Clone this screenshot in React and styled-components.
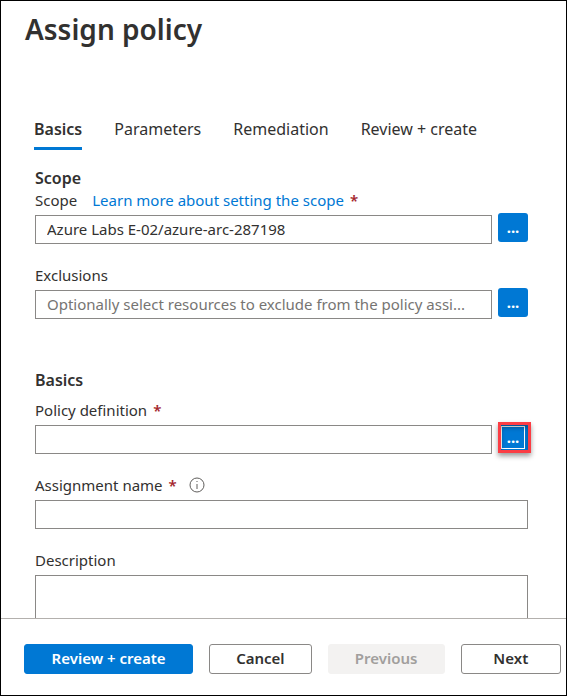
import React, { useState } from "react";
import styled, { createGlobalStyle, css } from "styled-components";

const GlobalStyle = createGlobalStyle`
  *, *::before, *::after { box-sizing: border-box; }
  body { margin: 0; background: #fff; }
  body, button, input, textarea {
    font-family: "Segoe UI", "Noto Sans", "Open Sans", sans-serif;
    font-size: 15px;
    line-height: 22px;
    color: #323130;
  }
`;

const Page = styled.div`
  display: flex;
  flex-direction: column;
  height: 100vh;
  border: 1px solid #000;
  background: #fff;
`;

const Content = styled.main`
  flex: 1;
  min-height: 0;
  overflow: hidden;
  padding: 8px 38px 0 24px;
`;

const Title = styled.h1`
  margin: 0;
  font-size: 28px;
  line-height: 40px;
  font-weight: 600;
`;

const TabList = styled.div`
  display: flex;
  gap: 32px;
  margin: 68px 0 17px 9px;
`;

const Tab = styled.button`
  padding: 0 0 6px;
  border: 0;
  border-bottom: 3px solid ${(p) => (p.$active ? "#0078d4" : "transparent")};
  background: none;
  font-size: 16px;
  line-height: 24px;
  font-weight: ${(p) => (p.$active ? 600 : 400)};
  white-space: nowrap;
  cursor: pointer;
`;

const Form = styled.form`
  display: flex;
  flex-direction: column;
  gap: 50px;
  margin-left: 10px;
`;

const Section = styled.section`
  display: flex;
  flex-direction: column;
`;

const SectionTitle = styled.h2`
  margin: 0 0 ${(p) => (p.$spaced ? 8 : 0)}px;
  font-size: 16px;
  line-height: 22px;
  font-weight: 600;
`;

const Fields = styled.div`
  display: flex;
  flex-direction: column;
  gap: 20px;
`;

const Field = styled.div`
  display: flex;
  flex-direction: column;
  gap: 4px;
`;

const LabelRow = styled.div`
  display: flex;
  align-items: center;
  height: 22px;
  white-space: nowrap;
`;

const HelpLink = styled.a`
  margin-left: 15px;
  color: #0078d4;
  text-decoration: none;
`;

const Required = styled.span`
  margin-left: 6px;
  color: #a4262c;
  font-weight: 600;
`;

const InfoIcon = styled.svg`
  width: 16px;
  height: 16px;
  margin-left: 12px;
`;

const ControlRow = styled.div`
  display: flex;
  gap: 6px;
`;

const controlStyle = css`
  display: block;
  width: 100%;
  min-width: 0;
  border: 1px solid #8a8886;
  border-radius: 0;
  background: #fff;
  padding: 0 11px 2px;
`;

const TextInput = styled.input`
  ${controlStyle}
  flex: 1;
  min-height: 29px;
  height: 29px;
  &::placeholder { color: #767472; opacity: 1; }
`;

const TextArea = styled.textarea`
  ${controlStyle}
  height: 80px;
  resize: none;
`;

const PickerSlot = styled.div`
  position: relative;
  flex: none;
  height: 29px;
  margin-top: -2px;
`;

const PickerButton = styled.button`
  display: block;
  width: 30px;
  height: 29px;
  padding: 0 0 1px;
  border: 0;
  border-radius: 3px;
  background: #0078d4;
  color: #fff;
  font-weight: 700;
  cursor: pointer;
  ${(p) => p.$focused && css`
    outline: 1px solid #fff;
    outline-offset: -4px;
  `}
`;

const Highlight = styled.span`
  position: absolute;
  top: -1px;
  left: 0;
  width: 33px;
  height: 31px;
  border: 3px solid #fb3d44;
  box-shadow: 0 3px 5px rgba(0, 0, 0, 0.4), inset 0 3px 4px rgba(0, 0, 0, 0.3);
  pointer-events: none;
`;

const Footer = styled.footer`
  display: flex;
  flex: none;
  gap: 16px;
  padding: 25px 5px 21px 23px;
  border-top: 1px solid #b3b0ad;
  background: #fff;
`;

const looks = {
  primary: css`
    flex-grow: 170;
    background: #0078d4;
    border-color: #0078d4;
    color: #fff;
  `,
  wide: css`flex-grow: 117;`,
  normal: css`flex-grow: 102;`,
  narrow: css`flex-grow: 100;`,
};

const ActionButton = styled.button`
  flex: 1 1 0;
  max-width: 190px;
  height: 30px;
  padding: 0 0 2px;
  border: 1px solid #8a8886;
  border-radius: 3px;
  background: #fff;
  font-weight: 600;
  white-space: nowrap;
  cursor: pointer;
  ${(p) => looks[p.$look]}
  &:disabled {
    background: #f3f2f1;
    border-color: #f3f2f1;
    color: #a19f9d;
    cursor: default;
  }
`;

const TABS = ["Basics", "Parameters", "Remediation", "Review + create"];

function Picker({ label, highlighted }) {
  return (
    <PickerSlot>
      <PickerButton type="button" aria-label={label} $focused={highlighted}>...</PickerButton>
      {highlighted && <Highlight />}
    </PickerSlot>
  );
}

function Info() {
  return (
    <InfoIcon viewBox="0 0 16 16" role="img" aria-label="More information">
      <circle cx="8" cy="8" r="7" fill="none" stroke="#605e5c" />
      <path d="M8 7v5" stroke="#605e5c" />
      <path d="M8 4v1" stroke="#605e5c" />
    </InfoIcon>
  );
}

export default function App() {
  const [tab, setTab] = useState("Basics");
  return (
    <Page>
      <GlobalStyle />
      <Content>
        <Title>Assign policy</Title>
        <TabList role="tablist">
          {TABS.map((name) => (
            <Tab
              key={name}
              type="button"
              role="tab"
              aria-selected={tab === name}
              $active={tab === name}
              onClick={() => setTab(name)}
            >
              {name}
            </Tab>
          ))}
        </TabList>
        <Form>
          <Section>
            <SectionTitle>Scope</SectionTitle>
            <Fields>
              <Field>
                <LabelRow>
                  <label htmlFor="scope">Scope</label>
                  <HelpLink href="#scope">Learn more about setting the scope</HelpLink>
                  <Required>*</Required>
                </LabelRow>
                <ControlRow>
                  <TextInput id="scope" defaultValue="Azure Labs E-02/azure-arc-287198" />
                  <Picker label="Select scope" />
                </ControlRow>
              </Field>
              <Field>
                <LabelRow><label htmlFor="exclusions">Exclusions</label></LabelRow>
                <ControlRow>
                  <TextInput
                    id="exclusions"
                    placeholder="Optionally select resources to exclude from the policy assi..."
                  />
                  <Picker label="Select exclusions" />
                </ControlRow>
              </Field>
            </Fields>
          </Section>
          <Section>
            <SectionTitle $spaced>Basics</SectionTitle>
            <Fields>
              <Field>
                <LabelRow>
                  <label htmlFor="definition">Policy definition</label>
                  <Required>*</Required>
                </LabelRow>
                <ControlRow>
                  <TextInput id="definition" />
                  <Picker label="Select policy definition" highlighted />
                </ControlRow>
              </Field>
              <Field>
                <LabelRow>
                  <label htmlFor="name">Assignment name</label>
                  <Required>*</Required>
                  <Info />
                </LabelRow>
                <TextInput id="name" />
              </Field>
              <Field>
                <LabelRow><label htmlFor="description">Description</label></LabelRow>
                <TextArea id="description" />
              </Field>
            </Fields>
          </Section>
        </Form>
      </Content>
      <Footer>
        <ActionButton type="button" $look="primary">Review + create</ActionButton>
        <ActionButton type="button" $look="normal">Cancel</ActionButton>
        <ActionButton type="button" $look="wide" disabled>Previous</ActionButton>
        <ActionButton type="button" $look="narrow">Next</ActionButton>
      </Footer>
    </Page>
  );
}
